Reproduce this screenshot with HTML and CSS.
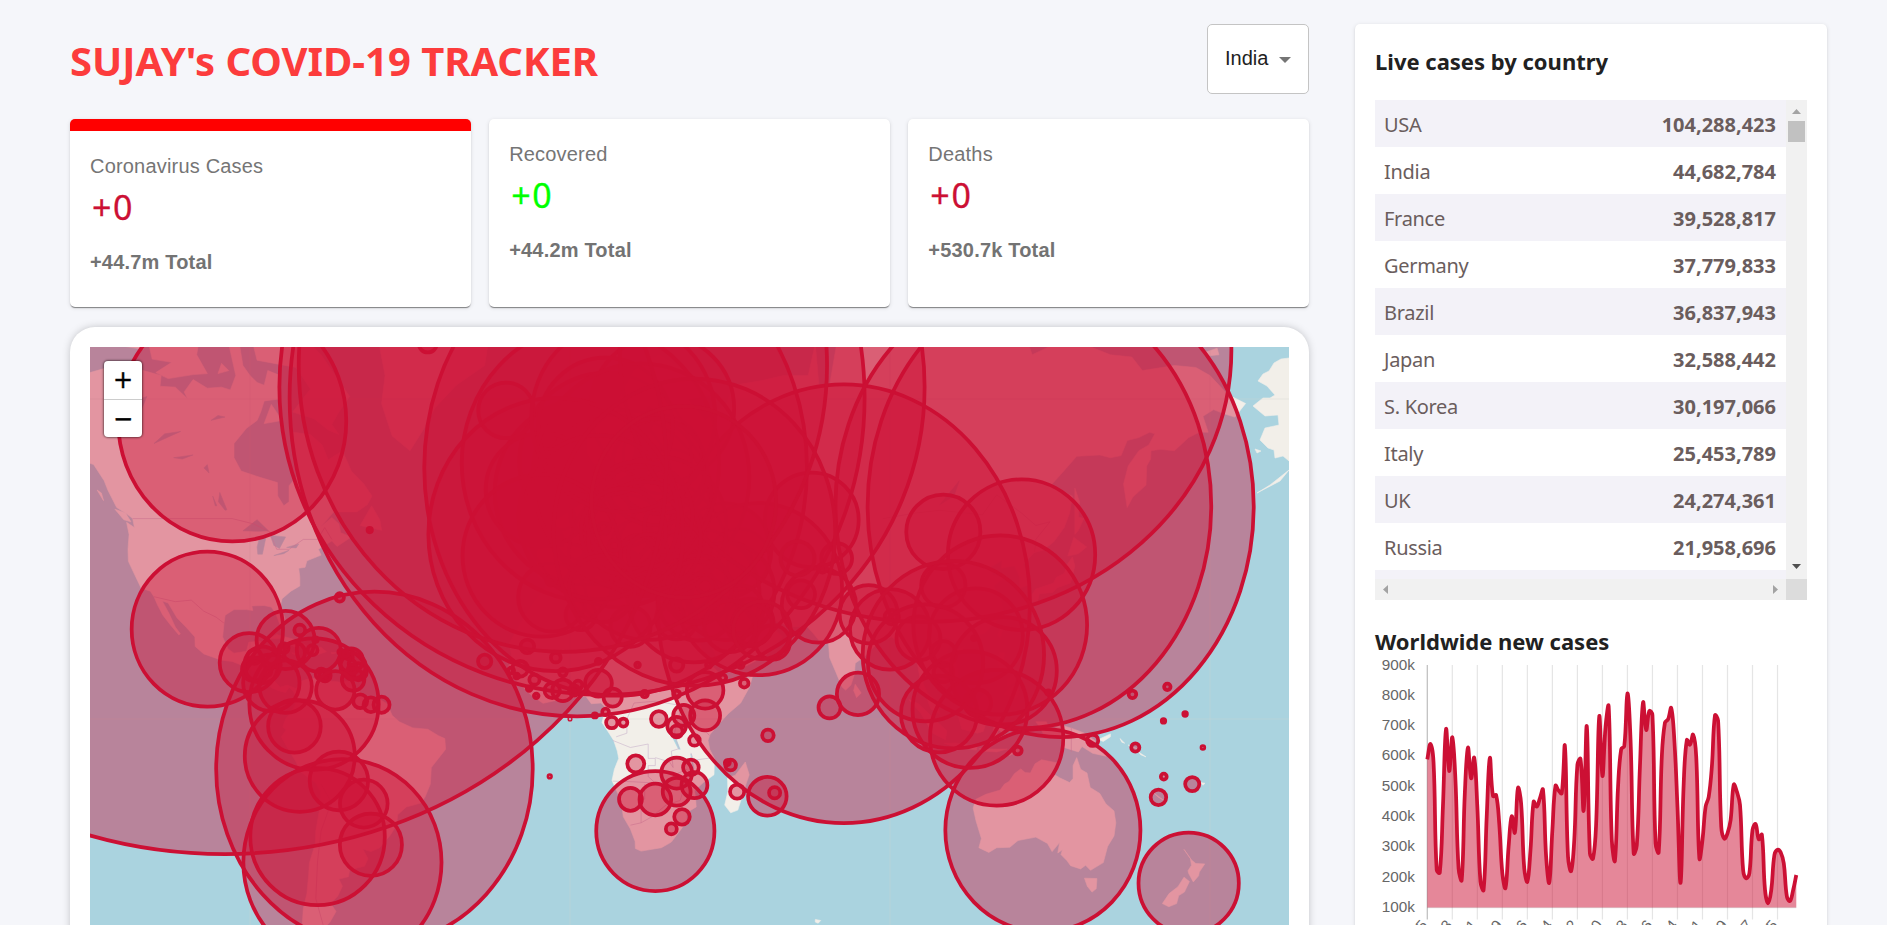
FILE: index.html
```html
<!DOCTYPE html>
<html lang="en">
<head>
<meta charset="utf-8">
<title>COVID-19 Tracker</title>
<link rel="stylesheet" href="styles.css">
</head>
<body>
<div class="app">
  <main class="main">
    <header class="header">
      <h1 class="brand">SUJAY's COVID-19 TRACKER</h1>
      <div class="select"><span>India</span><svg class="caret" viewBox="0 0 12 6"><path d="M0 0h12L6 6z"/></svg></div>
    </header>
    <section class="stats">
      <article class="stat stat--active">
        <p class="stat-title">Coronavirus Cases</p>
        <h2 class="stat-new">+0</h2>
        <p class="stat-total">+44.7m Total</p>
      </article>
      <article class="stat">
        <p class="stat-title">Recovered</p>
        <h2 class="stat-new stat-new--green">+0</h2>
        <p class="stat-total">+44.2m Total</p>
      </article>
      <article class="stat">
        <p class="stat-title">Deaths</p>
        <h2 class="stat-new">+0</h2>
        <p class="stat-total">+530.7k Total</p>
      </article>
    </section>
    <section class="map-card">
      <svg class="map" id="map" viewBox="0 0 1199 625"></svg>
      <div class="zoom"><span class="zoom-btn">+</span><span class="zoom-btn">−</span></div>
    </section>
  </main>
  <aside class="side">
    <h3 class="side-title">Live cases by country</h3>
    <div class="table-box">
      <div class="rows">
        <div class="row"><span>USA</span><strong>104,288,423</strong></div>
        <div class="row"><span>India</span><strong>44,682,784</strong></div>
        <div class="row"><span>France</span><strong>39,528,817</strong></div>
        <div class="row"><span>Germany</span><strong>37,779,833</strong></div>
        <div class="row"><span>Brazil</span><strong>36,837,943</strong></div>
        <div class="row"><span>Japan</span><strong>32,588,442</strong></div>
        <div class="row"><span>S. Korea</span><strong>30,197,066</strong></div>
        <div class="row"><span>Italy</span><strong>25,453,789</strong></div>
        <div class="row"><span>UK</span><strong>24,274,361</strong></div>
        <div class="row"><span>Russia</span><strong>21,958,696</strong></div>
        <div class="row"></div>
      </div>
      <div class="vbar">
        <svg class="arr" viewBox="0 0 9 5"><path d="M0 5h9L4.5 0z" fill="#a3a3a3"/></svg>
        <i class="thumb"></i>
        <svg class="arr arr--end" viewBox="0 0 9 5"><path d="M0 0h9L4.5 5z" fill="#505050"/></svg>
      </div>
      <div class="hbar">
        <svg class="harr" viewBox="0 0 5 9"><path d="M5 0v9L0 4.5z" fill="#a3a3a3"/></svg>
        <svg class="harr" viewBox="0 0 5 9"><path d="M0 0v9L5 4.5z" fill="#a3a3a3"/></svg>
      </div>
      <div class="corner"></div>
    </div>
    <h3 class="side-title side-title--chart">Worldwide new cases</h3>
    <svg class="chart" id="chart" viewBox="0 0 432 280"></svg>
  </aside>
</div>
<script src="app.js"></script>
</body>
</html>
```
FILE: styles.css
```css
* { box-sizing: border-box; margin: 0; }
html, body { height: 925px; overflow: hidden; }
body { background: #f5f6fa; font-family: "Noto Sans", "Open Sans", sans-serif; }
.app { display: flex; gap: 46px; height: 925px; overflow: hidden; padding: 24px 60px 0 70px; }
.main { width: 1239px; flex: none; }
.header { display: flex; justify-content: space-between; align-items: center; height: 70px; }
.brand { font-size: 40px; line-height: 54px; font-weight: 700; color: #fc3c3c; letter-spacing: -0.03px; padding-top: 4px; white-space: nowrap; }
.select { width: 102px; height: 70px; background: #fff; border: 1px solid #c4c4c4; border-radius: 5px; display: flex; align-items: center; justify-content: space-between; padding: 0 17px 1px 17px; font: 20px "Liberation Sans", Arial, sans-serif; color: #212121; }
.caret { width: 12px; height: 6px; fill: #757575; margin-top: 2px; }
.stats { display: flex; gap: 18.5px; margin-top: 25px; }
.stat { flex: 1; height: 188px; background: #fff; border-radius: 5px; padding: 20px; box-shadow: 0 2px 1px -1px rgba(0,0,0,.3), 0 1px 1px rgba(0,0,0,.18), 0 1px 4px rgba(0,0,0,.12); }
.stat--active { border-top: 12px solid #f00; }
.stat-title { font: 20px/30px "Liberation Sans", Arial, sans-serif; letter-spacing: .19px; color: #757575; }
.stat-new { font-size: 34px; line-height: 48px; font-weight: 400; color: #cc1034; padding-left: 2px; margin-top: 2px; letter-spacing: 1.6px; -webkit-text-stroke: .3px; }
.stat-new--green { color: #0f0; }
.stat-total { font: 700 20px/30px "Liberation Sans", Arial, sans-serif; letter-spacing: .19px; color: #737373; margin-top: 16px; }
.map-card { position: relative; margin-top: 20px; height: 665px; padding: 20px; background: #fff; border-radius: 25px; box-shadow: 0 0 8px -1px rgba(0,0,0,.25); }
.map { display: block; width: 1199px; height: 625px; background: #aad3df; }
.zoom { position: absolute; left: 34px; top: 34px; width: 38px; height: 76px; background: #fff; border-radius: 4px; box-shadow: 0 0 2px 1px rgba(0,0,0,.45); display: flex; flex-direction: column; }
.zoom-btn { height: 38px; text-align: center; font: 24px/39px "DejaVu Sans", sans-serif; color: #000; -webkit-text-stroke: .4px #000; }
.zoom-btn + .zoom-btn { border-top: 1px solid #ccc; }
.side { width: 472px; height: 1100px; flex: none; background: #fff; border-radius: 5px; padding: 20px; box-shadow: 0 2px 1px -1px rgba(0,0,0,.2), 0 1px 1px rgba(0,0,0,.14), 0 1px 4px rgba(0,0,0,.12); }
.side-title { font-size: 22px; line-height: 34px; font-weight: 700; color: #212121; white-space: nowrap; }
.side-title--chart { margin-top: 24px; }
.table-box { margin-top: 22px; display: grid; grid-template-columns: 411px 21px; grid-template-rows: 479px 21px; }
.rows { overflow: hidden; }
.row { display: flex; justify-content: space-between; align-items: center; height: 47px; padding: 2px 10px 0; font-size: 20px; color: #6a5d5d; }
.row span { letter-spacing: -.3px; margin-left: -1px; }
.row:nth-child(odd) { background: #f3f2f8; }
.vbar { background: #f1f1f1; display: flex; flex-direction: column; align-items: center; padding: 9px 0 10px; }
.arr { width: 9px; height: 5px; }
.arr--end { margin-top: auto; }
.thumb { width: 17px; height: 21px; margin-top: 7px; background: #c1c1c1; }
.hbar { background: #f1f1f1; display: flex; justify-content: space-between; align-items: center; padding: 0 8px; }
.harr { width: 5px; height: 9px; }
.corner { background: #dcdcdc; }
.chart { display: block; width: 432px; height: 280px; }
.axis { font: 15.3px "Liberation Sans", Arial, sans-serif; fill: #666; }
.area { fill: #cc1034; fill-opacity: .5; }
.line { fill: none; stroke: #cc1034; stroke-width: 3.75; stroke-linejoin: round; }
.grid { stroke: rgba(0,0,0,.1); stroke-width: 1.25; }
.grid--zero { stroke: rgba(0,0,0,.25); }
.land { fill: #f2efe9; stroke: #f2efe9; stroke-width: .6; stroke-linejoin: round; }
.lake { fill: #aad3df; stroke: #aad3df; stroke-width: .5; }
.border { fill: none; stroke: #c9b4cb; stroke-width: 1; stroke-opacity: .6; }
.tile { stroke: #cfd8cf; stroke-opacity: .35; }
.cases { fill: #cc1034; fill-opacity: .4; stroke: #cc1034; stroke-width: 3.75; }
```
FILE: app.js
```js
const NS = 'http://www.w3.org/2000/svg';
function add(parent, tag, attrs, text) {
  const el = document.createElementNS(NS, tag);
  for (const k in attrs) el.setAttribute(k, attrs[k]);
  if (text) el.textContent = text;
  parent.appendChild(el);
  return el;
}

// Web Mercator, world width 1280px
const D = Math.PI / 180, K = 1280 / (2 * Math.PI), CX = 480, CY = 372;
const px = lng => CX + lng * D * K;
const py = lat => {
  const l = Math.max(-85.0511, Math.min(85.0511, lat));
  return CY - K * Math.log(Math.tan((45 + l / 2) * D));
};
const unY = y => 2 * Math.atan(Math.exp((CY - y) / K)) / D - 90;
const toPath = s => 'M' + s.trim().split(/\s+/).map(p => {
  const [a, b] = p.split(',').map(Number);
  return px(a).toFixed(1) + ' ' + py(b).toFixed(1);
}).join('L');

const land = [
  // Americas
  `-140,60 -137,58.5 -134,58 -131,55.5 -130,54 -127.5,51 -124.5,49.8 -123,49 -122.5,47.3 -124.7,48.3 -124,46 -124.3,43 -124.2,40.5 -122.5,37.7 -120.6,34.5 -118,33.8 -117,32.5 -116,30.5 -114.5,28 -112.3,25.5 -110,23 -109.6,23.3 -111,25 -112.8,28.5 -114.7,31.5 -113,31 -110.5,27.3 -108,25 -105.5,22.5 -105.4,20 -103,18 -98,16.3 -95,16 -93,15.2 -90,13.8 -87.5,13 -86,11.5 -85.5,10 -83.7,8.6 -81.5,7.8 -80,7.4 -79,8.9 -78,8 -77.4,7 -77.3,4 -78.8,1.5 -80,0 -80.8,-2.3 -79.8,-3 -81.2,-5 -79.5,-8 -77,-12 -76,-14.5 -71.5,-17.7 -70.2,-20 -70.5,-25 -71.5,-30 -71.6,-33 -73.3,-37.5 -73.5,-40 -74,-44 -75,-47 -75.5,-52 -73,-54 -68,-55 -65.5,-54.7 -68.5,-52.5 -69,-50.5 -67.5,-49.5 -65.8,-47.5 -67.3,-46 -65.3,-44.5 -64,-42.5 -65,-41 -62.3,-40.5 -62,-39 -57.8,-38.2 -56.8,-36.5 -58.3,-34.3 -56,-34.9 -53.5,-34 -50.5,-31 -48.7,-28.5 -48.5,-26 -46,-24 -42,-23 -40.8,-21.5 -39.3,-18 -39,-13.5 -37,-11 -35,-8.5 -35.2,-5.5 -37,-4.7 -40,-2.9 -44.2,-2.5 -48,-.8 -50,1 -51.5,4.3 -54,5.8 -57.2,6 -60,8.3 -62,10.6 -64.5,10.3 -68,10.7 -70,12 -71.5,11 -71.7,9.2 -71.2,11.2 -73,11.4 -75.5,10.6 -77,8.5 -79.5,9.5 -81.5,8.9 -83.5,11 -83.3,15 -86,15.9 -88.5,15.8 -88,18.3 -87,21.4 -90.3,21.1 -91,18.7 -94.5,18.2 -96.2,19.3 -97.7,22.5 -97.3,26 -97,28 -94.5,29.4 -91,29.4 -89.2,29.2 -89.5,30.3 -86,30.4 -84,30 -82.8,28.5 -81.5,25.5 -80.2,25.5 -80.2,27.3 -81.4,30.5 -81,32 -78.5,33.8 -76,35 -76,37 -76.3,39 -74.5,39.2 -74,40.6 -71,41.5 -70,41.8 -70.8,43 -67,44.7 -65.5,43.6 -61.5,45.5 -64.5,46.3 -65,48 -67,49.2 -70,47.5 -66.5,50.2 -60,50.2 -57,51.5 -55.7,53 -58,55 -61.5,57 -64,60 -65.5,59.5 -68,58.7 -69.7,60.8 -73,62.2 -77.8,62.5 -78,60 -77,57.5 -76.6,56.3 -79,54.7 -79,52 -80.5,51.3 -82.2,53 -82.3,55.2 -87,56 -92.5,57 -94.5,59 -94.5,61 -91,63 -88,64 -87,65 -86,66.3 -82,66.5 -81.5,69 -85,69.5 -86,68 -88,68.3 -90,69 -92,70 -93,72 -96,72 -94,69 -95.5,67.5 -98,67.8 -102,67.7 -106,68.6 -108.5,67.3 -107.5,66.5 -111,67.8 -115.3,67.9 -115,69 -120,69.5 -125,70 -128,70 -135,69.3 -140,69.6`,
  // Arctic islands and Greenland
  `-65,62.2 -68,62.8 -72,64.2 -78,65 -73,67.6 -77,69.8 -88,70.5 -90,73 -78,73.5 -70,71 -62,66.8 -65,65 -67,63.5`,
  `-102,69.2 -106,69.1 -113,68.7 -116.5,69.3 -112,70.3 -117.5,70.6 -118.5,72 -112,73.3 -104,73 -105,71`, `-120,71.5 -126,71.8 -124,74 -118,74`,
  `-96,69.5 -99,69.2 -98,70.2`,
  `-86,63.6 -81,64 -84,65.9`, `-55,74 -52,69 -53,66 -50,62 -45,60 -41,63 -38,65.5 -32,68 -24,70 -22,74`,
  `-59,47.7 -53,46.8 -53.5,48.8 -55.8,51.3`, `-128,50.7 -125,50 -123.5,48.4 -125.5,48.8`,
  `-133,54 -131.8,53.5 -131.2,52.2`, `-84.8,22 -82.5,23.1 -77,21.7 -74.2,20.2 -77.6,19.9 -81,22`,
  `-74.4,18.5 -73,19.9 -70,19.8 -68.5,18.6 -71,17.8`, `-78.3,18.3 -76.4,18.1 -77.5,17.8`, `-67.1,18.4 -65.7,18.3 -67,18`,
  // Africa
  `-6,35.8 -9.8,31.5 -13,27.5 -17,21 -16.3,16 -17.4,14.7 -16.5,12 -13.3,9 -11,6.8 -7.6,4.4 -4,5.2 2,6.3 4.5,6.3 6,4.3 8.7,4.5 9.7,3.5 9.5,1 9,-1 11,-4 12.3,-6 13.3,-9 13.7,-11 12.5,-14 11.8,-17 14.4,-22.5 15,-26.5 17,-29.5 18.3,-32.5 18.4,-34.2 20,-34.8 25.7,-34 28.5,-32.7 31.3,-29.5 32.8,-27.5 32.8,-25.5 35.5,-24 35.3,-21.5 35,-19.8 37.5,-17.6 40.5,-15.5 40.6,-11 39.3,-8.5 38.8,-6 39.4,-4.3 41.5,-1.8 44.5,1.5 48,4.5 50.5,9 51.3,11.8 48,11.2 44.5,10.5 43,11.8 39.5,15.2 37.3,19 35.5,23.8 32.5,29.8 32.3,31.2 29,31 25,31.6 20,31 19.5,30.4 15,32.2 11,33.3 10.8,36 9.8,37.2 3,36.8 -2,35.2`,
  `49.3,-12 50.4,-15.5 49.5,-18 47.2,-24.8 45.2,-25.5 43.5,-23.5 44.4,-20 44.3,-16.3 46.5,-15.6`,
  // Eurasia
  `-9,43 -9.4,38.8 -8.8,37 -6,36.2 -2,36.8 0,39 3,42 7,43.5 10,43.5 12.5,41.5 16,38 17,40.5 12.5,44.5 13.7,45.5 19.5,42 21,37 23,37.5 23,40.3 26,40.7 29,41.2 28,43.5 31,46.5 36,46.5 38,44.5 41.5,41.6 35,42 27,40 27,37 36,36.5 34.3,31.3 34.9,29.5 39,21.5 43,13 48,14 55,17.5 59.8,22.5 56.3,25.7 54,24.1 51.5,25.5 48,30 51,28.5 57,26.9 61.5,25.2 66.8,25 68.5,23.3 70.5,21 72.7,21 73,17 74.8,13 76.5,9 77.5,8.1 79,9.5 80,12.5 80.2,15.5 82.5,17 87,21.2 90.5,22.5 92,21.5 94.3,17.5 97.5,16.5 98.5,11 98.5,8 100.3,6 101.5,2.8 104,1.4 103.3,4.5 100.5,7.5 99.3,10 100,13.4 102.5,12 105,9 107,10.5 109.2,12 108.7,15.3 106,18.5 106.7,20.7 109,21.5 113.5,22.2 117,23.6 119.5,26 121.8,29.5 121,32 119.3,35 122.4,37 119,37.5 118,39 121.5,40.7 121.3,39 125,39.5 126.5,37 126.5,34.5 129.2,35.3 129.3,37 127.5,39.8 130.5,42.3 133,42.8 136,44.5 139,47.3 140.5,50 141.3,53 137.5,54 135.3,54.8 138,56.5 142.5,59.2 149,59.4 152,59 155,59.3 156.7,61.4 160,61.8 163,62.5 164.5,62.3 162.8,60.8 160,60 157,57.8 155.7,55 156.7,51 158.3,52.8 162,54.8 162.2,57.8 163.3,58.8 163.4,60 166,60.2 170,60 174,61.8 177,62.5 179.5,62.5 178,64.5 181,65.3 184,64.8 187,64.4 190,66 185,67 180,69 176,69.8 170,70 161,69.5 158,70.8 152,71 140,72.5 130,71 127,73.5 110,74 80,73.5 75,72 73,68 70,68 69,72 67,69 60,69 54,68.5 46,68 44,66 38,64 33,66.5 41,67 33,69.3 25,71 18,69.5 12,65 5,62 5,58.5 8,58 11,59 13,55.5 16,56.5 18,60 17.5,62 22,65.8 25,65 21.5,61 28,60.5 23.5,59 22,57 20,54.8 11,54 8.5,57 8,54 4,52 -2,49.5 -4.5,48.3 -1.5,46 -1.5,43.5`,
  `178.5,71.2 182,71.6 182.5,71 179,70.9`, `142,54.3 143.3,52 143,49.3 144.5,49 143,46.8 142,46 142,50`,
  `140,41.6 141.7,45.4 145.3,43.5 143,42.1`, `130,31.3 131.5,31.5 132,33.2 135.8,33.5 137,34.6 140.8,35.7 142,39.5 141.3,41.4 140,40 139,37.8 136.8,37 136,35.7 131,34.3 130,33`,
  `120.2,23 121,22 122,25 121,25`, `108.7,19 111,20 109.5,18.2`, `79.8,8 80.2,9.7 81.9,7.3 80.6,6`,
  `120.3,16 120.8,18.5 122.2,18.4 122,16 124,13 121,13.7`, `122,7 123.5,8.5 125.7,9.7 126.5,7.5 125.4,5.7 124,6.5`, `123,11 125,12.4 125,10.2 123,9.2`,
  `95.3,5.5 98,4.3 103.5,-1 106,-3.3 105.6,-5.8 102,-4 98.7,1.6`, `105.3,-6.8 108.5,-6.7 114.5,-7.7 114.3,-8.7 108,-7.8`, `115,-8.3 119,-8.4 123,-8.4 120,-9.2 116,-9`,
  `109,1.5 111.5,1.4 113,3.2 116.7,7 119.2,5.2 117.8,1 116.2,-3.5 114.5,-4 110.2,-2.8`,
  `119.5,-5.5 119,-3 120,.5 125,1.5 121,.5 120.2,-1 123.3,-.9 121.5,-2 122.5,-4.5 120.5,-3`, `123.5,-10.3 127,-8.5 125,-8.7`, `127.5,.8 128.5,1.5 128,-.8`, `128,-3.2 130.7,-3.3 129,-3`,
  `131,-.8 134,-.8 135,-3.3 138,-1.7 141,-2.6 144.5,-3.9 147.8,-6.2 147,-7 150.8,-10.4 147,-9.6 144,-7.7 143,-9.2 139,-8 138,-5.5 133,-4 132.5,-2.8`,
  `148.5,-5.8 152,-4.2 152,-5 150,-6.3`, `154.7,-5.5 156,-6.8 155.2,-6.5`, `157,-7.3 159.5,-8.3 158,-8`, `160,-9.3 162,-10.6 160.5,-10`, `164,-20.2 167,-22.3 165.5,-21.5`, `166.6,-15 167.5,-16.3 166.8,-15.8`, `177.3,-17.6 178.6,-17.8 178,-18.3`,
  // Australia, Tasmania, New Zealand
  `114.2,-22 113.4,-24.3 114.2,-27.5 115.7,-31.8 115,-34 117.8,-35.1 120,-34 123.7,-33.9 126,-32.3 131,-31.5 134.3,-33 135.6,-34.9 137.7,-32.8 137.2,-35.2 138.5,-34.5 138.1,-35.6 139.8,-37 140.8,-38.1 143.6,-38.8 145,-38 146.4,-39.1 150,-37.4 151.2,-33.7 153,-31.2 153.5,-28 153,-25 150.7,-23.2 149,-20.5 146.3,-18.9 145.4,-15 143.6,-14 142.5,-10.8 141.5,-13 141.5,-16.5 140.5,-17.6 137.7,-16.3 135.5,-15 136.8,-12.2 132.6,-11.4 130.8,-12.5 129.5,-15 128,-14.9 126.8,-13.9 125,-15.2 123.5,-17.3 122.2,-18 121,-19.6 117,-20.7`,
  `144.7,-40.8 148.2,-40.9 148,-43 146.8,-43.7 145.5,-42.5`, `172.7,-34.4 174.8,-36.8 176,-37.6 178.5,-37.7 177,-39.5 176.8,-40.3 175.3,-41.6 174,-39.8 173.8,-39.2 174.8,-38 174.5,-36.5`,
  `172.7,-40.6 174.2,-41.5 172.8,-43.7 171.2,-44.4 170.6,-46 168.4,-46.6 166.6,-46 168.5,-44 171,-42.6`, `69,-49 70.5,-49.2 69.8,-49.7 69,-49.5`, `-60,-51.5 -58,-51.5 -59.5,-52.2`
];
const lakes = [
  `-92,46.7 -88,48.8 -84.8,46.7 -87.5,46.6`, `-87.8,42 -86.5,42 -85.5,45.5 -87.3,45.5 -88,43.5`, `-84.3,45.8 -80,45.5 -81.7,43.2 -83.3,43.8`,
  `-83.3,41.7 -79,42.8 -80.5,42.1`, `-79.7,43.4 -76.3,44.1 -77,43.3`, `-98.5,53.6 -96.5,50.6 -97,50.5 -98.9,52`, `-100.5,53 -99.3,51.3 -99.8,51.3`,
  `-124.5,66 -119,66.8 -121,64.8`, `-117,61 -109.5,62.6 -114,62.3`, `-111.5,59 -106,59.4 -109,58.8`, `-103,57.5 -101.5,56.7 -102,58`, `104,51.5 109.5,55.5 108,53`, `31.7,-.5 34,-.5 33.5,-2.5 32,-2.3`,
  `29.2,-4 31,-8.5 30.5,-8.4 29,-5.5`, `34,-9.8 34.9,-13.8 34.5,-13.8`, `-101,64 -97,64.4 -99,64.6`
];
const borders = [
  `-123,49 -95,49 -89,48 -84.5,46.5 -82.5,43 -79,43 -75,45 -71,45 -69,47.3 -67,45`, `-117,32.5 -111,31.3 -106.5,31.7 -103,29 -99.5,27.5 -97.3,26`,
  `-69,-51 -71.5,-45 -71,-37 -70,-30 -68,-25 -67,-23 -70,-18`, `12,-6 17,-8 22,-7 22,-11 24,-11 24,-13 22,-13 22,-16 24,-17.7`, `12,-17.2 18,-17.4 25,-17.8 29,-16 30.5,-15 33,-14`, `20,-28 20,-22 21,-22 21,-18`,
  `17,-28.6 20,-28 23,-26.5 27,-23.5 31,-22.3 33,-16`, `24,-10.8 28,-12 29,-13.5 28.5,-9 30.7,-8.3 29.3,-4.5 30,-1 31,2`, `34,-1 37.7,-3 39.2,-4.6`, `34,-9.5 34.8,-11.5 40.4,-10.8`, `18,4.5 16,0 16,-4 13,-5`, `18,4.5 24,5 30,4 34,4 36,5 42,4`, `141,-2.6 141,-9.2`,
  `88,49 97,50 104,50.5 116,49.7 120,53.2 127,50 131,47.7 135,48.4 131,45 130.7,42.5`, `100,20 104,22.5 108,21.5`
];
// lat, lng, cases (thousands)
const countries = [33,65,208,41,20,334,28,3,271,42.5,1.6,47.8,-12.5,18.5,105,18.25,-63.17,3.9,17.05,-61.8,9.1,-34,-64,10044,40,45,446,12.5,-69.97,44,-27,133,11350,47.33,13.33,5790,40.5,47.5,827,24.25,-76,37.4,26,50.55,700,24,90,2037,13.17,-59.53,106,53,28,994,50.83,4,4690,17.25,-88.75,70,9.5,2.25,28,32.33,-64.75,18.8,27.5,90.5,62.6,-17,-65,1190,44,18,401,-22,24,329,-10,-55,36838,18.5,-64.5,7.3,4.5,114.67,270,43,25,1297,13,-2,22,-3.5,30,53.6,16,-24,63,13,105,138.7,6,12,124,60,-95,4580,12.15,-68.27,11.6,19.5,-80.5,31,7,21,15.3,15,19,7.6,49.2,-2.1,101,-30,-71,5135,35,105,503,4,-72,6355,-12.17,44.25,9,-1,15,25,10,-84,1180,8,-5,88,45.17,15.5,1266,21.5,-80,1112,12.1,-68.9,46,35,33,646,49.75,15.5,4600,0,25,95,56,10,3400,11.5,43,15.7,15.4,-61.3,15.8,19,-70.67,660,-2,-77.5,1057,27,30,515.8,13.83,-88.92,201.8,2,10,17,15,39,10,59,26,616,-26.5,31.5,74,8,38,500,-51.75,-59,1.9,62,-7,34.7,-18,175,68.8,64,26,1460,46,2,39529,4,-53,98,-1,11.75,49,13.47,-16.57,12.6,42,43.5,1820,51,9,37780,8,-2,171,36.13,-5.35,20,39,22,5790,72,-40,12,12.12,-61.67,19.7,16.25,-61.58,200,15.5,-90.25,1230,11,-10,38,12,-15,9,5,-59,73,19,-72.42,34,15,-86.5,470,22.25,114.17,2876,47,20,2194,65,-18,209,20,77,44683,-5,120,6730,32,53,7565,33,44,2465,53,-8,1700,54.23,-4.55,38,31.5,34.75,4790,42.83,12.83,25454,18.25,-77.5,153,36,138,32588,31,36,1746,48,68,1490,1,38,342.8,1.4,173,4.9,29.34,47.66,663,41,75,206.8,18,105,218,57,25,976,33.83,35.83,1227,-29.5,28.5,34.5,6.5,-9.5,8,25,17,507,47.17,9.53,21,56,24,1300,49.75,6.17,300,22.17,113.55,3.5,-20,47,67.8,-13.5,34,88.6,2.5,112.5,5037,3.25,73,185.7,17,-4,33,35.83,14.58,117,9,168,15.5,14.67,-61,228,20,-12,63.4,-20.28,57.55,42,-12.83,45.17,42,23,-102,7360,6.92,158.18,22,47,29,597,43.73,7.4,16,46,105,1008,42,19.3,287,16.75,-62.2,1.4,32,-5,1272,-18.25,35,231,22,98,634,-22,17,171,-0.53,166.92,4.6,28,84,1001,52.5,5.75,8580,-21.5,165.5,80,-41,174,2170,13,-85,15,16,8,9.5,10,8,266,41.83,22,347,62,10,1479,40,127,4773,21,57,399,30,70,1576,7.5,134.5,6,32,35.25,621,9,-80,1027,-6,147,46.8,-23,-58,735,-10,-76,4481,13,122,4074,52,20,6380,39.5,-8,5562,25.5,51.25,493,46,25,3320,60,100,21959,-2,30,133,-21.15,55.5,494,37,127.5,30197,17.33,-62.75,6.6,18.08,-63.95,12,13.25,-61.2,9.6,17.9,-62.83,5.4,-15.95,-5.7,2.2,13.88,-61.13,30,46.83,-56.33,3.4,43.77,12.42,23,1,7,6.3,25,45,829,14,-14,89,44,21,2470,-4.58,55.67,50.6,8.5,-11.5,7.8,1.37,103.8,2220,18.03,-63.08,11,48.67,19.5,1860,46,15,1320,-8,159,24.6,10,49,27.3,-29,24,4056,7,30,18.4,40,-4,13712,7,81,672,15,30,63.7,4,-56,82,62,15,2695,47,8,4390,35,38,57.5,23.5,121,9600,39,71,17.8,-6,35,42,15,100,4726,-8.83,125.92,23.4,8,1.17,39,11,-61,186,34,9,1151,39,35,17043,21.75,-71.58,6.6,-8,178,2.8,24,54,1050,1,32,170,38,-97,104288,54,-2,24274,49,32,5380,-33,-56,1034,41,64,251,-16,167,12,8,-66,552,16.17,107.83,11527,15,48,12,-15,30,340,-20,30,262,0,0,.7];

const map = document.getElementById('map');
land.forEach(s => add(map, 'path', { class: 'land', d: toPath(s) + 'Z' }));
add(map, 'path', { class: 'land', d: 'M1199 11L1191 12 1184 16 1179 24 1173 27 1168 34 1177 39 1185 48 1180 51 1173 51 1163 59 1175 69 1188 68 1189 78 1175 81 1170 93 1178 101 1184 103 1185 111 1193 109 1199 114ZM1199 123L1190 134 1167 146 1180 138ZM1165 102l6 2-4 2Z' });
lakes.forEach(s => add(map, 'path', { class: 'lake', d: toPath(s) + 'Z' }));
borders.forEach(s => add(map, 'path', { class: 'border', d: toPath(s) }));
[160, 480, 800, 1120].forEach(x => add(map, 'path', { class: 'tile', d: `M${x} 0V625` }));
[52, 372].forEach(y => add(map, 'path', { class: 'tile', d: `M0 ${y}H1199` }));

for (let i = 0; i < countries.length; i += 3) {
  const lat = countries[i], lng = countries[i + 1];
  const latR = Math.sqrt(countries[i + 2] * 1000) * 800 / 6371000 / D;
  const top = py(lat + latR), cy = (top + py(lat - latR)) / 2, lat2 = unY(cy);
  let lngR = Math.acos((Math.cos(latR * D) - Math.sin(lat * D) * Math.sin(lat2 * D)) / (Math.cos(lat * D) * Math.cos(lat2 * D))) / D;
  if (!lngR) lngR = latR / Math.cos(lat * D);
  add(map, 'ellipse', { class: 'cases', cx: px(lng), cy, rx: px(lngR) - CX, ry: cy - top });
}

// New cases chart: vertical offsets of the daily values
const daily = [658,612,668,990,998,800,567,693,592,720,985,1020,760,623,715,653,800,1025,1050,830,654,768,765,850,1000,1044,920,829,878,744,790,985,1025,930,785,800,775,749,950,1028,870,737,752,760,618,950,993,900,675,657,812,559,940,956,850,529,708,560,499,900,962,740,628,618,460,600,940,915,680,487,570,513,525,910,937,650,548,538,504,600,800,1028,730,600,614,584,650,955,900,800,770,680,526,542,860,896,880,840,734,755,795,990,1015,1000,870,852,898,884,1050,1090,1050,945,929,937,970,1070,1083,1050,1005];
const chart = document.getElementById('chart');
const X0 = 52.3, STEP = 3.127, TOP = 7, BOTTOM = 249.5;
const pts = daily.map((v, i) => [X0 + i * STEP, TOP + (v - 375) / 3]);
for (let i = 0; i < 15; i++) {
  const x = X0 + i * STEP * 8;
  add(chart, 'path', { class: i ? 'grid' : 'grid grid--zero', d: `M${x} ${TOP}V${BOTTOM + 12}` });
}
add(chart, 'path', { class: 'grid', d: `M${X0} ${BOTTOM}H${X0 + 118 * STEP}` });
let curve = `M${pts[0]}`;
const cps = pts.map((p, i) => {
  const a = pts[Math.max(0, i - 1)], b = pts[Math.min(pts.length - 1, i + 1)];
  const d1 = Math.hypot(p[0] - a[0], p[1] - a[1]), d2 = Math.hypot(b[0] - p[0], b[1] - p[1]);
  const f1 = .4 * d1 / (d1 + d2), f2 = .4 * d2 / (d1 + d2);
  return [[p[0] - f1 * (b[0] - a[0]), p[1] - f1 * (b[1] - a[1])], [p[0] + f2 * (b[0] - a[0]), p[1] + f2 * (b[1] - a[1])]];
});
for (let i = 1; i < pts.length; i++) curve += `C${cps[i - 1][1]} ${cps[i][0]} ${pts[i]}`;
add(chart, 'path', { class: 'area', d: `${curve}V${BOTTOM}H${X0}Z` });
add(chart, 'path', { class: 'line', d: curve });
for (let i = 0; i < 9; i++) add(chart, 'text', { class: 'axis', x: 40, y: TOP + 4.5 + i * 30.3, 'text-anchor': 'end' }, `${900 - i * 100}k`);
['05', '13', '21', '29', '06', '14', '22', '30', '08', '16', '24', '01', '09', '17', '25'].forEach((t, i) => {
  const x = X0 + i * STEP * 8;
  add(chart, 'text', { class: 'axis', 'text-anchor': 'end', transform: `translate(${x + 1} ${BOTTOM + 18}) rotate(-50)` }, t);
});
```
